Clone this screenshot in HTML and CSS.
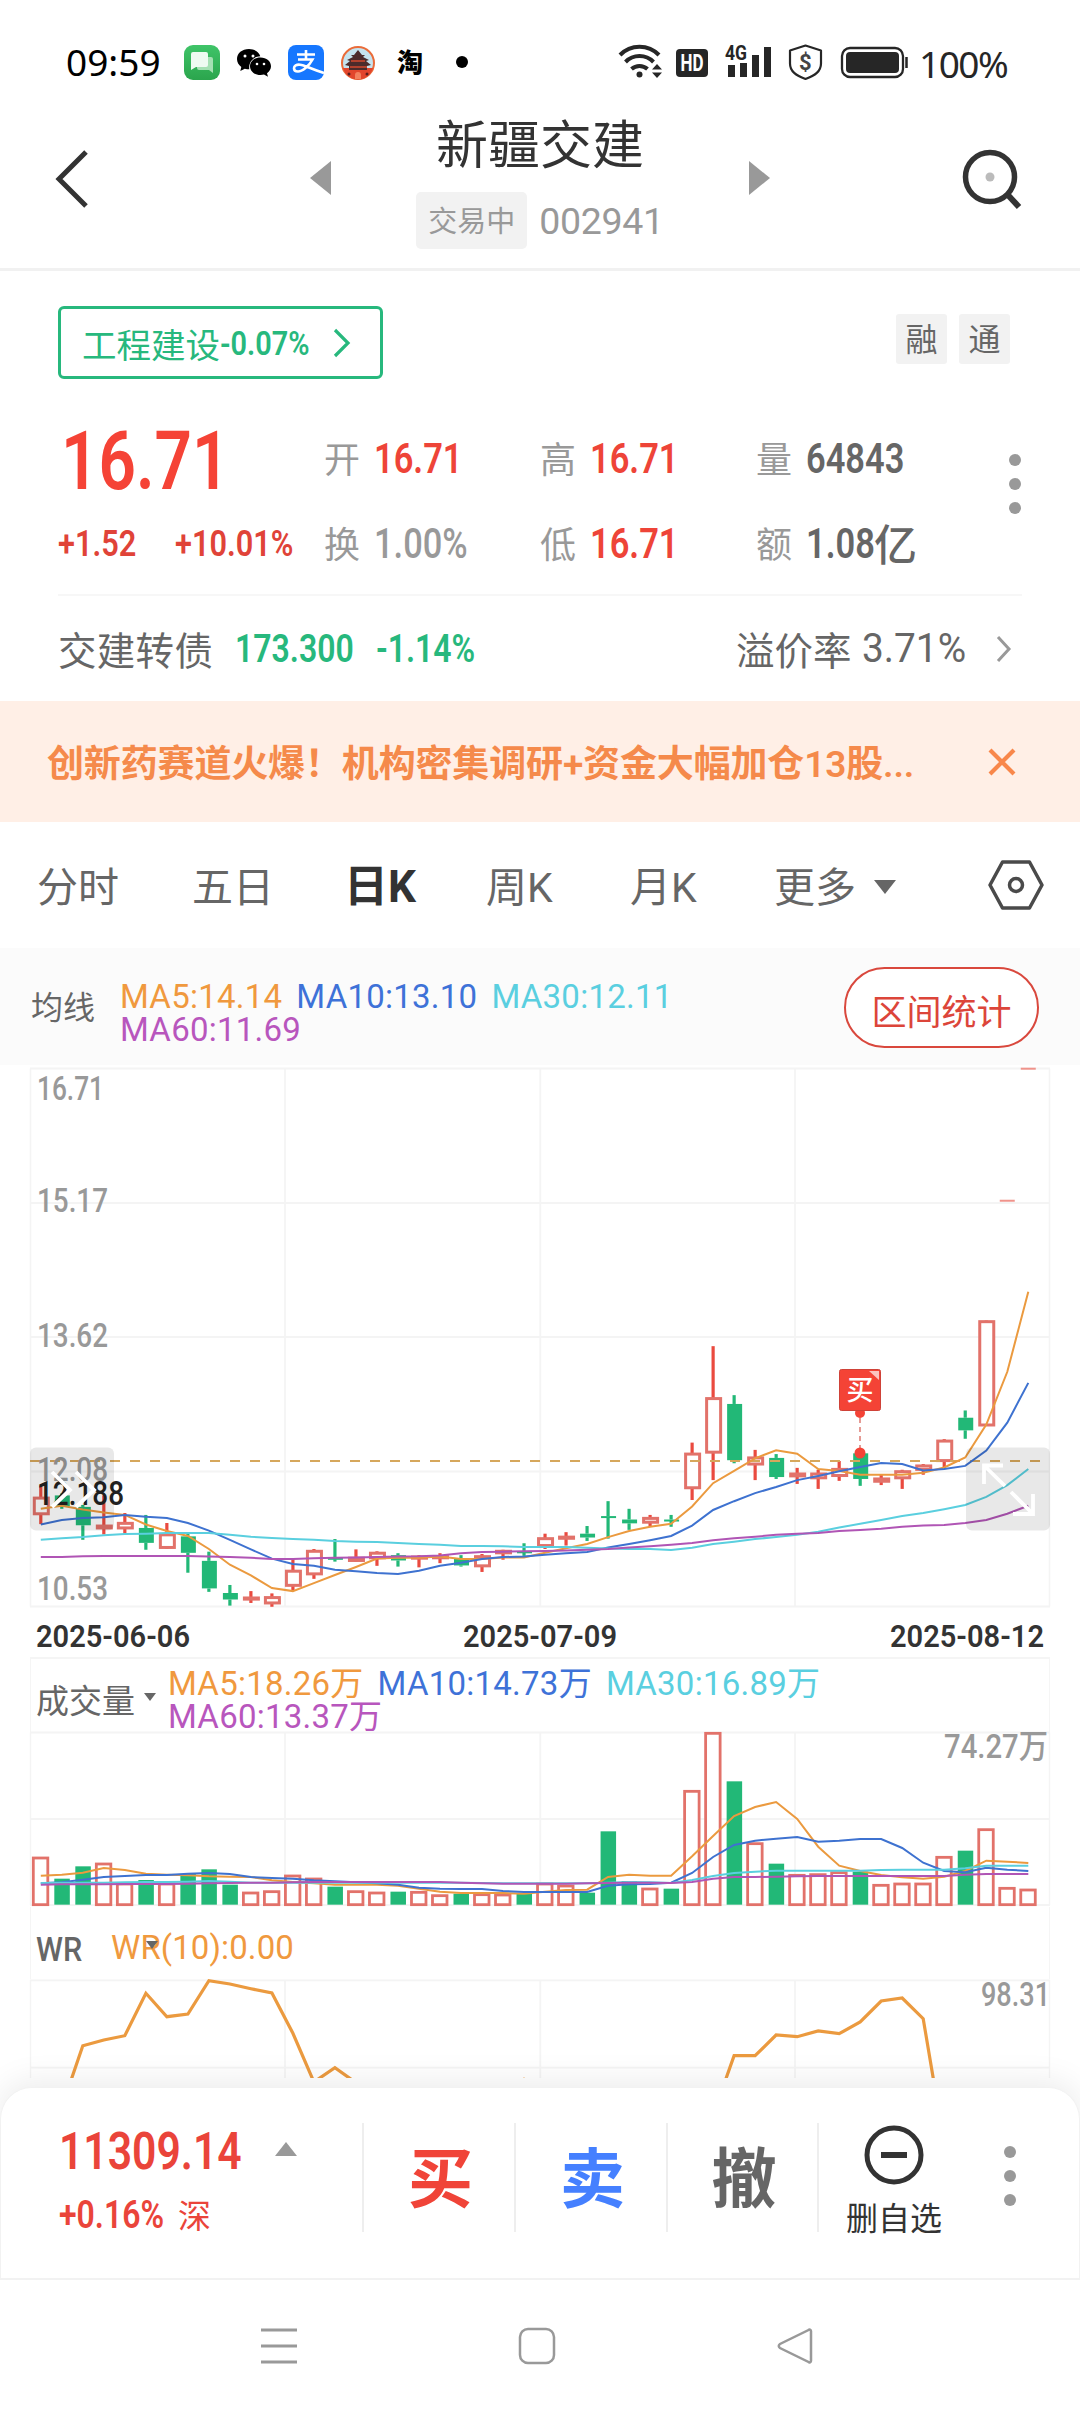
FILE: index.html
```
<!DOCTYPE html>
<html lang="zh-CN">
<head>
    <meta charset="utf-8">
    <title>新疆交建 002941</title>
    <link rel="stylesheet" href="styles.css">
</head>
<body>
    <section class="status">
        <span class="time">09:59</span>
        <svg class="status-icons" width="300" height="40" viewBox="180 42 300 40">
            <defs>
                <linearGradient id="msg" x1="0" y1="0" x2="0" y2="1">
                    <stop offset="0" stop-color="#3fc468"/><stop offset="1" stop-color="#2ba54d"/>
                </linearGradient>
            </defs>
            <!-- messages -->
            <rect x="184" y="45" width="36" height="35" rx="9" fill="url(#msg)"/>
            <path d="M197 57h14a2 2 0 0 1 2 2v14l-4-3h-10a2 2 0 0 1-2-2z" fill="#a5e0b3"/>
            <path d="M193 52h13a2 2 0 0 1 2 2v11a2 2 0 0 1-2 2h-10l-5 3v-16a2 2 0 0 1 2-2z" fill="#effaf1"/>
            <!-- wechat -->
            <path d="M249 49c-7 0-12 4.300-12 10 0 3.300 1.600 6 4.300 8l-1 4 4.500-2.300c1.500.4 3 .6 4.500.6-1-8 5-13 11-13C259 52 254.500 49 249 49z" fill="#000"/>
            <path d="M260.500 57.500c-6 0-10.500 3.800-10.500 8.800s4.500 8.800 10.500 8.800c1.200 0 2.400-.2 3.500-.5l4 2.200-1-3.600c2.500-1.700 4-4.200 4-6.900 0-5-4.500-8.800-10.500-8.800z" fill="#000"/>
            <g fill="#fff"><circle cx="245" cy="56" r="1.500"/><circle cx="253" cy="56" r="1.500"/><circle cx="257" cy="64" r="1.300"/><circle cx="264" cy="64" r="1.300"/></g>
            <!-- alipay -->
            <rect x="288" y="45" width="36" height="35" rx="8" fill="#1677ff"/>
            <path d="M297 54.500h18M306 50v9M298 59.500h14.500c-1.500 3-4 6-7 8.500-3 2.400-5 3.500-7.500 3.500-2.500 0-4-1.300-4-3.200 0-2.500 2.500-4 6-3.600 5 .5 10 4 24 8.300" fill="none" stroke="#fff" stroke-width="2.600"/>
            <!-- tower -->
            <circle cx="358" cy="63" r="16" fill="#c5e3ef" stroke="#ea6c3a" stroke-width="2"/>
            <path d="M343 68h30a15.500 15.500 0 0 1-30 0z" fill="#e2452c"/>
            <path d="M358 50l4 5h3l-2 2 6 3-3 1 5 4-4 1v4h-18v-4l-4-1 5-4-3-1 6-3-2-2h3z" fill="#4c2b2b"/>
            <path d="M351 61h14M350 67h17" stroke="#d2492f" stroke-width="1.500"/>
            <circle cx="349" cy="74" r="1.500" fill="#5b1d1d"/><circle cx="367" cy="74" r="1.500" fill="#5b1d1d"/>
            <path d="M355 79v-4a3 3 0 0 1 6 0v4z" fill="#f3805e"/>
            <text x="397" y="72" class="tao">淘</text>
            <circle cx="462" cy="62" r="6" fill="#000"/>
        </svg>
        <svg class="status-right" width="300" height="40" viewBox="615 42 300 40">
            <g fill="none" stroke="#262626" stroke-width="4">
                <path d="M620 55a27 27 0 0 1 39 0"/>
                <path d="M625.500 62a19.500 19.500 0 0 1 28 0"/>
                <path d="M631.500 69a12 12 0 0 1 16 0"/>
            </g>
            <circle cx="639.500" cy="74.500" r="3" fill="#262626"/>
            <path d="M657 64l5 5.500h-10zM657 78l5-5.500h-10z" fill="#262626"/>
            <rect x="676" y="49" width="32" height="28" rx="4" fill="#262626"/>
            <text x="680.500" y="71" class="hd" textLength="23" lengthAdjust="spacingAndGlyphs">HD</text>
            <text x="725" y="60" class="g4" textLength="22" lengthAdjust="spacingAndGlyphs">4G</text>
            <path d="M728 65h7v12h-7zM740 63h7v14h-7zM752 55h7v22h-7zM764 47h7v30h-7z" fill="#262626"/>
            <path d="M805.500 45.500l15.500 5v13c0 8-6 12-15.500 15.500-9.500-3.500-15.500-7.500-15.500-15.500v-13z" fill="none" stroke="#262626" stroke-width="2.200" stroke-linejoin="round"/>
            <text x="799" y="70" class="dollar">$</text>
            <rect x="842" y="48" width="61" height="29" rx="8" fill="none" stroke="#262626" stroke-width="2.300"/>
            <rect x="846" y="52" width="53" height="21" rx="4" fill="#262626"/>
            <path d="M906.500 57v11" stroke="#262626" stroke-width="2.500"/>
        </svg>
        <span class="battery">100%</span>
    </section>

    <header class="header">
        <svg class="back" width="40" height="64" viewBox="0 0 40 64"><path d="M34 5L7 32l27 27" fill="none" stroke="#333" stroke-width="5"/></svg>
        <svg class="prev" width="21" height="34" viewBox="0 0 21 34"><path d="M21 0v34L0 17z" fill="#999"/></svg>
        <div class="title">
            <h1>新疆交建</h1>
            <p><span class="badge">交易中</span><span class="code">002941</span></p>
        </div>
        <svg class="next" width="21" height="34" viewBox="0 0 21 34"><path d="M0 0v34l21-17z" fill="#999"/></svg>
        <svg class="search" width="62" height="62" viewBox="960 148 62 62">
            <circle cx="990" cy="177" r="24.500" fill="none" stroke="#333" stroke-width="5.500"/>
            <path d="M1007 194l12 13" stroke="#333" stroke-width="6"/>
            <circle cx="990" cy="177" r="4.500" fill="#bbb"/>
        </svg>
    </header>

    <section class="info">
        <div class="row tags">
            <div class="sector">工程建设<span class="din">-0.07%</span>
                <svg width="18" height="30" viewBox="0 0 18 30"><path d="M2 2l13 13L2 28" fill="none" stroke="#27b87d" stroke-width="3.200"/></svg>
            </div>
            <div class="marks"><span>融</span><span>通</span></div>
        </div>
        <div class="quote">
            <div class="big"><span class="din">16.71</span></div>
            <div class="cell"><label>开</label><span class="din red">16.71</span></div>
            <div class="cell"><label>高</label><span class="din red">16.71</span></div>
            <div class="cell"><label>量</label><span class="din">64843</span></div>
            <div class="change"><span class="din">+1.52</span><span class="din">+10.01%</span></div>
            <div class="cell"><label>换</label><span class="din gray">1.00%</span></div>
            <div class="cell"><label>低</label><span class="din red">16.71</span></div>
            <div class="cell amount"><label>额</label><span class="din">1.08</span><b>亿</b></div>
            <div class="dots"><i></i><i></i><i></i></div>
        </div>
        <div class="row bond">
            <span class="bond-name">交建转债</span>
            <span class="din bond-price">173.300</span>
            <span class="din bond-rate">-1.14%</span>
            <span class="premium">溢价率</span>
            <span class="din premium-rate">3.71%</span>
            <svg width="16" height="28" viewBox="0 0 16 28"><path d="M2 2l11 12L2 26" fill="none" stroke="#999" stroke-width="3"/></svg>
        </div>
    </section>

    <section class="banner">
        <span>创新药赛道火爆！机构密集调研+资金大幅加仓13股...</span>
        <svg width="28" height="28" viewBox="0 0 28 28"><path d="M2 2l24 24M26 2L2 26" stroke="#f8874a" stroke-width="4.200"/></svg>
    </section>

    <nav class="tabs">
        <a>分时</a>
        <a>五日</a>
        <a class="active">日K</a>
        <a>周K</a>
        <a>月K</a>
        <a>更多</a>
        <svg class="down" width="22" height="14" viewBox="0 0 22 14"><path d="M0 0h22L11 14z" fill="#666"/></svg>
        <svg class="setting" width="56" height="50" viewBox="0 0 56 50"><path d="M14.500 2h27L54 25 41.500 48h-27L2 25z" fill="none" stroke="#4a4a4a" stroke-width="3.500" stroke-linejoin="round"/><circle cx="28" cy="25" r="6.500" fill="none" stroke="#4a4a4a" stroke-width="3.500"/></svg>
    </nav>

    <section class="ma-bar">
        <span class="ma-name">均线</span>
        <div class="legend">
            <span class="ma5">MA5:14.14</span><span class="ma10">MA10:13.10</span><span class="ma30">MA30:12.11</span><br><span class="ma60">MA60:11.69</span>
        </div>
        <button>区间统计</button>
    </section>

    <svg id="kline" class="chart" width="1080" height="592" viewBox="0 1065 1080 592"></svg>

    <section class="sub-head volume-head">
        <span class="sub-name">成交量</span>
        <svg class="mini" width="12" height="8" viewBox="0 0 12 8"><path d="M0 0h12L6 8z" fill="#666"/></svg>
        <div class="legend">
            <span class="ma5">MA5:18.26万</span><span class="ma10">MA10:14.73万</span><span class="ma30">MA30:16.89万</span><br><span class="ma60">MA60:13.37万</span>
        </div>
    </section>
    <svg id="volume" class="chart" width="1080" height="175" viewBox="0 1732 1080 175"></svg>

    <section class="sub-head wr-head">
        <span class="din wr-name">WR</span>
        <span class="ma5 wr-value">WR(10):0.00<svg width="12" height="8" viewBox="0 0 12 8"><path d="M0 0h12L6 8z" fill="#666"/></svg></span>
    </section>
    <svg id="wr" class="chart" width="1080" height="99" viewBox="0 1979 1080 99"></svg>

    <footer class="trade">
        <div class="index">
            <p><span class="din index-value">11309.14</span><svg width="22" height="14" viewBox="0 0 22 14"><path d="M0 14h22L11 0z" fill="#999"/></svg></p>
            <p><span class="din index-rate">+0.16%</span><span class="market">深</span></p>
        </div>
        <div class="action buy">买</div>
        <div class="action sell">卖</div>
        <div class="action cancel">撤</div>
        <div class="remove">
            <svg width="60" height="60" viewBox="0 0 60 60"><circle cx="30" cy="30" r="27" fill="none" stroke="#333" stroke-width="5"/><path d="M17 30h26" stroke="#333" stroke-width="6"/></svg>
            <span>删自选</span>
        </div>
        <div class="dots"><i></i><i></i><i></i></div>
    </footer>

    <section class="system">
        <svg width="36" height="38" viewBox="0 0 36 38"><path d="M0 3h36M0 19h36M0 35h36" stroke="#999" stroke-width="3"/></svg>
        <svg width="38" height="38" viewBox="0 0 38 38"><rect x="2" y="2" width="34" height="34" rx="8" fill="none" stroke="#999" stroke-width="2.500"/></svg>
        <svg width="38" height="38" viewBox="0 0 38 38"><path d="M34 4v30a1.500 1.500 0 0 1-2.500 1L3 21q-2.500-2 0-4L31.500 3A1.500 1.500 0 0 1 34 4z" fill="none" stroke="#999" stroke-width="2.500"/></svg>
    </section>

    <script src="chart.js"></script>
</body>
</html>
```
FILE: styles.css
```
body {
    margin: 0;
    width: 1080px;
    background-color: #fff;
    color: #666;
    font-family: Roboto, "Noto Sans CJK SC", sans-serif;
}
h1, p {
    margin: 0;
    font-weight: normal;
}
svg {
    display: block;
    flex: none;
}
.row {
    display: flex;
    align-items: center;
}
/* narrow digits */
.din {
    display: inline-block;
    transform: scaleX(0.82);
    transform-origin: left center;
    white-space: nowrap;
    font-weight: 600;
}
.red {
    color: #ee4438;
}
.gray {
    color: #999;
}
.ma5 { color: #f0993e; }
.ma10 { color: #3e72d8; }
.ma30 { color: #5acfe0; }
.ma60 { color: #b856bd; }

.status {
    display: flex;
    align-items: center;
    height: 76px;
    padding: 24px 0 0 66px;
    font-family: "Noto Sans", sans-serif;
    font-size: 37px;
    color: #000;
}
.time {
    width: 114px;
    margin-top: -1px;
}
.status-right {
    margin-left: 135px;
}
.battery {
    margin: 3px 0 0 4px;
    font-size: 37px;
    letter-spacing: -1.5px;
    color: #262626;
}
.tao {
    font: 900 26px "Noto Sans CJK SC", sans-serif;
}
.hd {
    font: 700 24px Roboto, sans-serif;
    fill: #fff;
}
.g4 {
    font: 700 21px Roboto, sans-serif;
    fill: #262626;
}
.dollar {
    font: 700 22px Roboto, sans-serif;
    fill: #444;
}

.header {
    display: flex;
    box-sizing: border-box;
    height: 171px;
    border-bottom: 3px solid #f1f1f1;
}
.back {
    margin: 47px 0 0 52px;
}
.prev {
    margin: 61px 0 0 218px;
}
.next {
    margin: 61px 0 0 79px;
}
.search {
    margin: 48px 0 0 190px;
}
.title {
    width: 260px;
    margin-left: 79px;
    padding-top: 15px;
    text-align: center;
}
.title h1 {
    font-size: 52px;
    line-height: 64px;
    color: #333;
}
.title p {
    display: flex;
    align-items: center;
    justify-content: center;
    margin-top: 13px;
    color: #999;
}
.badge {
    width: 111px;
    height: 57px;
    line-height: 60px;
    margin-right: 12px;
    border-radius: 5px;
    background-color: #f2f2f2;
    font-size: 29px;
}
.code {
    font-size: 37.500px;
    letter-spacing: -0.3px;
}

.info {
    box-sizing: border-box;
    height: 430px;
    padding: 35px 58px 0;
}
.tags {
    justify-content: space-between;
    align-items: flex-start;
}
.sector {
    display: flex;
    align-items: center;
    box-sizing: border-box;
    width: 325px;
    height: 73px;
    padding-left: 21px;
    border: 3px solid #27b87d;
    border-radius: 6px;
    font-size: 34.500px;
    color: #27b87d;
}
.sector .din {
    width: 113px;
    font-size: 34px;
    transform: scaleX(0.85);
}
.marks {
    display: flex;
    gap: 12px;
    margin: 8px 12px 0 0;
}
.marks span {
    width: 51px;
    height: 50px;
    line-height: 53px;
    border-radius: 3px;
    background-color: #f2f2f2;
    font-size: 32px;
    text-align: center;
}
.quote {
    display: grid;
    grid-template-columns: 266px 216px 216px 200px 1fr;
    grid-template-rows: 85px 85px;
    align-items: center;
    margin-top: 37px;
}
.big {
    height: 85px;
    line-height: 91px;
    font-size: 82px;
    color: #f54336;
}
.big .din {
    transform: scaleX(0.8);
    margin-left: 3px;
}
.change {
    display: flex;
    grid-column: 1;
    font-size: 37px;
    color: #e04338;
}
.change .din:first-child {
    width: 117px;
}
.change .din {
    transform: scaleX(0.83);
}
.cell {
    display: flex;
    align-items: center;
    font-size: 42px;
    white-space: nowrap;
}
.cell label {
    width: 50px;
    margin-top: -3px;
    font-size: 36px;
    color: #999;
}
.amount .din {
    width: 68px;
}
.amount b {
    margin-top: -4px;
    font-weight: 500;
    font-size: 43px;
}
.gray.din {
    font-weight: 500;
}
.dots {
    display: flex;
    flex-direction: column;
    gap: 12px;
}
.dots i {
    width: 12px;
    height: 12px;
    border-radius: 50%;
    background-color: #999;
}
.quote .dots {
    grid-column: 5;
    grid-row: 1 / 3;
    margin: -34px 0 0 53px;
}
.bond {
    height: 105px;
    margin-top: 8px;
    border-top: 2px solid #f7f7f7;
    font-size: 38.500px;
    white-space: nowrap;
}
.bond-name {
    width: 177px;
    margin-top: -2px;
    letter-spacing: 0.3px;
}
.bond-price {
    width: 141px;
    font-size: 39px;
    color: #27b87d;
}
.bond-rate {
    width: 360px;
    font-size: 39px;
    color: #27b87d;
}
.premium {
    width: 126px;
    margin-top: -2px;
}
.premium-rate {
    width: 134px;
    font-size: 40px;
    font-weight: 400;
    transform: scaleX(0.97);
}

.banner {
    display: flex;
    align-items: center;
    height: 121px;
    padding-left: 47px;
    background-color: #ffefe6;
    color: #f58a4b;
    font-size: 37px;
    font-weight: 600;
    letter-spacing: -0.15px;
    white-space: nowrap;
}
.banner span {
    width: 941px;
    margin-top: -1px;
}

.tabs {
    display: flex;
    align-items: center;
    height: 126px;
    padding-left: 37px;
    font-size: 41px;
    white-space: nowrap;
}
.tabs a {
    width: 155px;
    margin-top: -3px;
}
.tabs a:nth-child(2) { width: 152px; }
.tabs a:nth-child(3) { width: 142px; }
.tabs a:nth-child(4) { width: 144px; }
.tabs a:nth-child(5) { width: 144px; }
.tabs a:nth-child(6) { width: 100px; }
.tabs .active {
    margin-top: -5px;
    color: #333;
    font-size: 44px;
    font-weight: 700;
}
.down {
    margin-top: 3px;
}
.setting {
    margin-left: 92px;
}

.ma-bar {
    display: flex;
    align-items: center;
    height: 117px;
    padding-left: 31px;
    background-color: #fbfbfb;
}
.ma-name {
    width: 89px;
    margin-top: -3px;
    font-size: 32px;
}
.legend {
    font-size: 33px;
    line-height: 33px;
    letter-spacing: 0.25px;
    white-space: nowrap;
}
.legend span {
    margin-right: 14px;
}
.ma-bar .legend {
    width: 724px;
    margin-top: 12px;
}
.ma-bar button {
    box-sizing: border-box;
    width: 195px;
    height: 81px;
    margin-top: 2px;
    padding: 3px 0 0;
    border: 2.500px solid #d9483d;
    border-radius: 41px;
    background-color: #fff;
    color: #dc453a;
    font-family: inherit;
    font-size: 35px;
}

.chart {
    overflow: visible;
}
#wr {
    clip-path: inset(-20px 0 0 0);
}
.axis {
    font: 500 33.500px Roboto, "Noto Sans CJK SC", sans-serif;
    fill: #999;
}
.dark {
    fill: #222;
}
.date {
    font: 600 32px Roboto, sans-serif;
    fill: #333;
}
.mark {
    font: 500 27px "Noto Sans CJK SC", sans-serif;
    fill: #fff;
}

.sub-head {
    display: flex;
    box-sizing: border-box;
    width: 1020px;
    margin-left: 30px;
    border: 1px solid #f5f5f5;
    border-bottom: none;
}
.volume-head {
    height: 75px;
    border-top-width: 2px;
}
.sub-name {
    width: 108px;
    padding-left: 5px;
    font-size: 33px;
    line-height: 86px;
}
.mini {
    margin: 34px 12px 0 0;
}
.volume-head .legend {
    padding-top: 8px;
}
.wr-head {
    height: 72px;
    border-top: none;
}
.wr-name {
    width: 75px;
    margin-left: 5px;
    font-size: 34px;
    line-height: 85px;
    transform: scaleX(0.9);
    font-weight: 500;
}
.wr-value {
    position: relative;
    font-size: 33px;
    line-height: 81px;
    letter-spacing: 0.1px;
}
/* arrow drawn over the value */
.wr-value svg {
    position: absolute;
    left: 35px;
    top: 34px;
}

.trade {
    display: flex;
    position: relative;
    box-sizing: border-box;
    height: 193px;
    margin-top: 9px;
    padding: 35px 0 0 58px;
    border: 1px solid #f2f2f2;
    border-bottom-width: 2px;
    border-radius: 32px 32px 0 0;
    background-color: #fff;
    box-shadow: 0 -6px 32px rgba(0, 0, 0, 0.08);
    clip-path: inset(-50px 0 0 0);
}
.index {
    width: 303px;
    color: #ea443a;
}
.index p {
    display: flex;
    align-items: center;
}
.index p:first-child {
    height: 57px;
}
.index p:last-child {
    height: 70px;
}
.index-value {
    width: 216px;
    font-size: 52px;
}
.index svg {
    margin-top: -5px;
}
.index-rate {
    width: 119px;
    font-size: 39px;
}
.market {
    margin-top: -3px;
    font-size: 33px;
}
.action {
    box-sizing: border-box;
    width: 152px;
    height: 109px;
    padding-left: 3px;
    border-left: 2px solid #eee;
    font-size: 65px;
    font-weight: 700;
    line-height: 115px;
    text-align: center;
}
.buy { color: #f04438; }
.sell { color: #4580ff; }
.cancel {
    border-right: 2px solid #eee;
    width: 153px;
}
.remove {
    display: flex;
    flex-direction: column;
    align-items: center;
    width: 150px;
    padding-top: 2px;
    font-size: 32px;
    color: #333;
}
.remove span {
    line-height: 68px;
}
.trade .dots {
    margin: 23px 0 0 35px;
}

.system {
    display: flex;
    height: 132px;
    padding: 47px 0 0 261px;
    box-sizing: border-box;
    gap: 221px;
}
```
FILE: chart.js
```
var RED = "#ea4a3f", GREEN = "#22b877", GRID = "#f4f4f4";
var COLORS = ["#eb9a3f", "#3e72d0", "#5acfdf", "#b055b5"];

// x of each trading day
function px(i) {
    return 40.8 + i * 21.01;
}
function py(v) {
    return 1040 + v / 2.613;
}
function vy(v) {
    return 1600 + v / 3;
}
function line(x1, y1, x2, y2, color, w, extra) {
    return `<path d="M${x1} ${y1}L${x2} ${y2}" stroke="${color}" stroke-width="${w}" ${extra || ""}/>`;
}
function rect(x, y, w, h, extra) {
    return `<rect x="${x}" y="${y}" width="${w}" height="${h}" ${extra}/>`;
}
function curve(data, fy, color, w, start) {
    var pts = data.map((v, i) => px(i + (start || 0)).toFixed(1) + "," + fy(v).toFixed(1)).join(" ");
    return `<polyline points="${pts}" fill="none" stroke="${color}" stroke-width="${w}"/>`;
}
function label(x, y, w, cls, text) {
    return `<text x="${x}" y="${y}" class="${cls}" textLength="${w}" lengthAdjust="spacingAndGlyphs">${text}</text>`;
}
function grid(top, bottom, rows) {
    var s = "";
    [30.5, 1049.5].forEach(x => s += line(x, top, x, bottom, GRID, 1.5));
    [285, 540.3, 795].forEach(x => s += line(x, top, x, bottom, GRID, 1.8));
    rows.forEach(y => s += line(30, y, 1050, y, GRID, 1.8));
    return s;
}

// high, body top, body bottom, low, up
var candles = [
    [1165,1197,1238,1265,1],[1185,1190,1218,1225,0],[1215,1220,1268,1306,0],[1190,1270,1275,1292,1],
    [1236,1263,1275,1290,1],[1241,1275,1314,1332,0],[1262,1293,1326,1330,1],[1290,1297,1340,1392,0],
    [1337,1361,1433,1442,0],[1424,1445,1462,1478,0],[1440,1458,1461,1471,1],[1446,1457,1471,1481,1],
    [1357,1388,1425,1438,1],[1330,1336,1395,1408,1],[1304,1353,1357,1363,0],[1331,1354,1360,1364,1],
    [1336,1341,1353,1374,1],[1341,1346,1360,1376,0],[1346,1351,1354,1378,1],[1341,1350,1353,1367,1],
    [1346,1355,1373,1376,0],[1343,1350,1374,1390,1],[1332,1336,1340,1358,1],[1315,1336,1340,1348,0],
    [1290,1303,1321,1330,1],[1286,1299,1302,1321,1],[1270,1290,1300,1309,0],[1205,1244,1247,1303,0],
    [1225,1253,1263,1280,0],[1241,1250,1260,1270,1],[1241,1253,1256,1272,0],[1052,1082,1170,1202,1],
    [800,937,1077,1150,1],[928,951,1098,1106,0],[1071,1092,1108,1150,1],[1082,1092,1142,1147,0],
    [1118,1134,1139,1160,1],[1123,1134,1144,1173,1],[1100,1122,1138,1152,1],[1075,1080,1147,1165,0],
    [1136,1147,1153,1163,1],[1123,1128,1144,1173,1],[1108,1113,1122,1136,1],[1043,1048,1099,1116,1],
    [968,987,1020,1042,0],[733,736,1006,1006,1],[420,420,420,420,1],[75,75,75,75,1]
];
var ma = [
    [1225,1217,1227,1235,1241,1266,1283,1296,1330,1371,1399,1432,1440,1419,1398,1377,1355,1353,1353,1350,1356,1356,1352,1352,1340,1328,1317,1299,1283,1272,1264,1219,1158,1126,1093,1072,1081,1121,1126,1136,1136,1136,1131,1117,1091,1005,867,658],
    [1266,1254,1249,1247,1241,1246,1249,1262,1282,1306,1331,1355,1369,1374,1384,1388,1393,1395,1387,1374,1366,1356,1351,1350,1345,1341,1338,1326,1317,1307,1296,1269,1228,1205,1184,1168,1150,1139,1127,1116,1105,1108,1125,1121,1113,1073,1000,896],
    [1306,1302,1299,1294,1291,1290,1288,1288,1288,1293,1298,1301,1304,1306,1309,1311,1312,1314,1317,1319,1322,1322,1323,1325,1325,1325,1327,1329,1330,1330,1333,1327,1317,1311,1304,1299,1293,1285,1274,1264,1254,1244,1236,1226,1215,1194,1163,1121],
    [1351,1351,1349,1348,1348,1348,1348,1348,1350,1351,1353,1356,1356,1354,1353,1352,1351,1350,1349,1347,1341,1338,1337,1336,1335,1334,1332,1330,1326,1323,1319,1314,1307,1302,1298,1293,1290,1288,1283,1280,1277,1272,1269,1267,1262,1254,1238,1217]
];

var s = grid(1068.5, 1606.5, [1068.5, 1203, 1337, 1471.5, 1606.5]);
candles.forEach(function (c, i) {
    var x = px(i), top = py(c[1]), bottom = py(c[2]), h = bottom - top;
    var color = c[4] ? RED : GREEN;
    if (c[0] == c[3]) {
        s += line(x - 7.5, top, x + 7.5, top, "#f0938b", 2);
        return;
    }
    s += line(x, py(c[0]), x, top, color, 3.2);
    s += line(x, bottom, x, py(c[3]), color, 3.2);
    if (c[4]) {
        s += rect(x - 6.5, top, 14, Math.max(h, 1), 'fill="#fff" stroke="#e2726a" stroke-width="3"');
    } else {
        s += rect(x - 7, top, 15, Math.max(h, 2), `fill="${GREEN}"`);
    }
});
s += line(30, 1461, 1050, 1461, "#d6a75c", 1.8, 'stroke-dasharray="10 10"');
ma.forEach((d, k) => s += curve(d, py, COLORS[k], 2));
s += label(37, 1100, 67, "axis", "16.71");
s += label(37, 1212, 71, "axis", "15.17");
s += label(37, 1346.5, 71, "axis", "13.62");
s += label(37, 1481, 71, "axis", "12.08");
s += label(37, 1599.5, 71, "axis", "10.53");
s += label(37, 1505, 87, "axis dark", "12.188");

// buy marker
s += line(860, 1418, 860, 1448, "#e59a94", 2, 'stroke-dasharray="5 4"');
s += '<circle cx="860" cy="1453" r="5.500" fill="#f44336"/><circle cx="860" cy="1413" r="5" fill="#f44336"/>';
s += rect(839.5, 1369.5, 41, 41, 'rx="2" fill="#f44336" stroke="#cf4238"');
s += '<path d="M869 1371h10v9z" fill="#fbc4c0"/>';
s += '<text x="846.500" y="1400" class="mark">买</text>';

// overlay buttons
s += rect(30, 1447.5, 84, 83, 'rx="6" fill="#000" fill-opacity="0.09"');
s += rect(966, 1447.5, 84, 83, 'rx="6" fill="#000" fill-opacity="0.09"');
s += '<path d="M52 1472l18 18-18 17M76 1472l18 18-18 17" fill="none" stroke="#fff" stroke-width="3.800"/>';
s += '<path d="M984 1484v-18.500h19M984 1465.500l21 20.500M1011 1492l22 22M1033 1494v20h-20" fill="none" stroke="#fff" stroke-width="3.800"/>';
s += label(36, 1646.5, 154, "date", "2025-06-06");
s += label(463, 1646.5, 154, "date", "2025-07-09");
s += label(890, 1646.5, 154, "date", "2025-08-12");
document.getElementById("kline").innerHTML = s;

var volumes = [774,836,799,792,852,840,852,822,808,854,879,875,828,837,860,875,879,875,877,887,881,884,885,880,852,858,878,694,843,867,866,574,400,544,731,791,826,824,818,815,856,852,852,772,752,689,865,870];
var volumeMa = [
    [827,824,818,804,810,821,824,826,829,830,831,841,846,850,854,854,854,857,866,875,879,879,879,881,875,870,869,831,824,827,827,769,708,648,621,606,657,740,797,813,825,832,836,830,813,782,785,789],
    [850,847,839,831,828,825,825,821,819,822,831,834,836,841,844,847,850,854,863,866,867,867,873,876,876,876,876,857,853,852,848,819,771,735,722,716,711,725,722,717,717,744,788,813,817,803,809,813],
    [849,848,848,848,847,846,846,845,843,845,848,848,848,848,848,848,848,848,848,848,848,849,850,850,850,850,850,848,846,847,849,840,828,819,815,812,812,812,812,812,810,809,809,809,805,797,797,797],
    [854,853,853,853,852,852,852,851,850,849,848,848,847,846,846,846,846,846,846,846,848,850,851,851,851,851,850,849,848,848,849,846,836,831,831,830,829,828,828,828,828,828,828,828,824,822,822,822]
];
s = grid(1732.5, 1905, [1732.5, 1819, 1905]);
volumes.forEach(function (v, i) {
    var up = candles[i][4], x = px(i);
    if (up) {
        s += rect(x - 7.5, vy(v), 14.5, vy(914) - vy(v), 'fill="#fff" stroke="#e2726a" stroke-width="2.8"');
    } else {
        s += rect(x - 7.5, vy(v), 15.5, vy(914) - vy(v), `fill="${GREEN}"`);
    }
});
volumeMa.forEach((d, k) => s += curve(d, vy, COLORS[k], 2));
s += label(944, 1757.5, 104, "axis", "74.27万");
document.getElementById("volume").innerHTML = s;

s = grid(1980, 2078, [1980.3, 2067.7]);
s += curve([1522,1337,1320,1307,1180,1250,1242,1142,1152,1166,1179,1300,1446,1403,1448], vy, COLORS[0], 3.2, 1);
s += curve([1490,1438,1490], vy, COLORS[0], 3, 22);
s += curve([1545,1367,1367,1305,1310,1293,1301,1266,1203,1194,1256,1630], vy, COLORS[0], 3.2, 32);
s += label(981, 2006, 69, "axis", "98.31");
document.getElementById("wr").innerHTML = s;
```
